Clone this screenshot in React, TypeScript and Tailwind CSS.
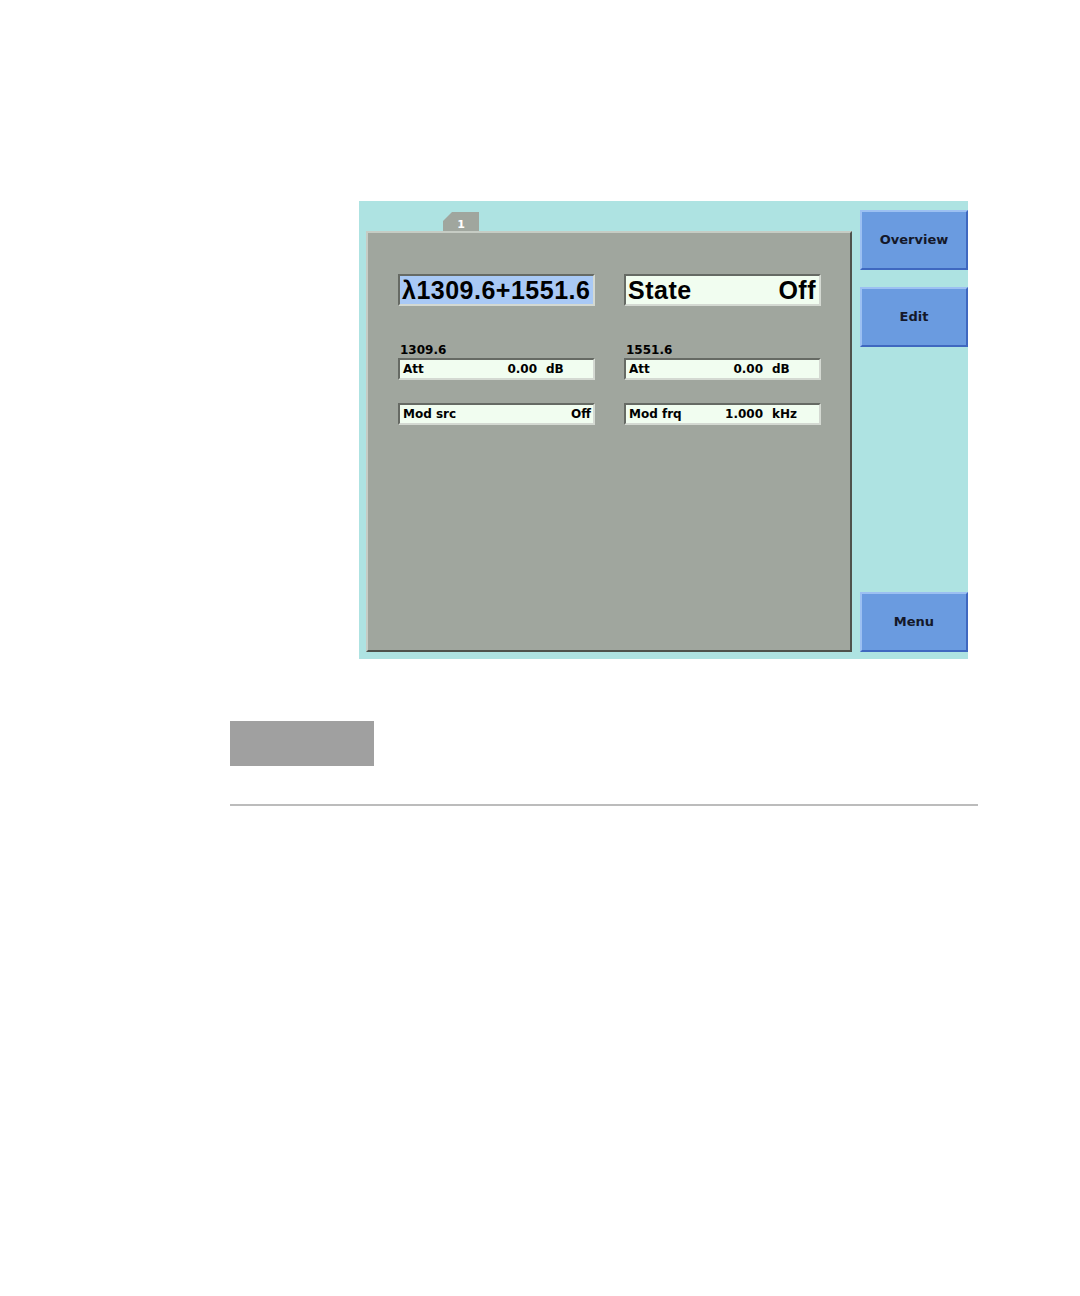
import React from "react";

const font = { fontFamily: '"DejaVu Sans", "Liberation Sans", sans-serif' };
const bigFont = { fontFamily: '"Liberation Sans", Arial, sans-serif' };

function SoftKey({ label }: { label: string }) {
  return (
    <div className="flex h-[60px] w-[108px] items-center justify-center border-2 border-t-[#9cc0f2] border-l-[#9cc0f2] border-b-[#3f68c0] border-r-[#3f68c0] bg-[#6a9be0] text-[13px] font-semibold text-[#14182a]">
      {label}
    </div>
  );
}

function Field({
  label,
  value,
  unit,
  big,
  blue,
}: {
  label: string;
  value?: string;
  unit?: string;
  big?: boolean;
  blue?: boolean;
}) {
  return (
    <div
      className={`flex w-[197px] items-center border-2 border-t-[#666a64] border-l-[#666a64] border-b-[#d4d9d2] border-r-[#d4d9d2] text-black ${
        big
          ? "h-[32px] pl-[2px] pr-[3px] text-[25px] font-bold tracking-[0.5px]"
          : "h-[22px] pl-[3px] pr-[2px] text-[12px] font-bold"
      } ${blue ? "bg-[#a9c9f5]" : "bg-[#f1fdf0]"}`}
      style={big ? bigFont : undefined}
    >
      <span className="flex-1 leading-none">{label}</span>
      {value && <span className="leading-none">{value}</span>}
      {unit !== undefined && <span className="ml-[9px] w-[45px] leading-none">{unit}</span>}
    </div>
  );
}

function Channel({ name, second }: { name: string; second: React.ReactNode }) {
  return (
    <div>
      <div className="mb-[1px] pl-[2px] pt-[3px] text-[12px] font-bold leading-[14px] text-black">{name}</div>
      <Field label="Att" value="0.00" unit="dB" />
      <div className="mt-[23px]">{second}</div>
    </div>
  );
}

export default function App() {
  return (
    <div className="min-h-[1296px] w-[1080px] bg-white" style={font}>
      <div className="pt-[201px] pl-[359px]">
        <div className="flex h-[458px] w-[609px] bg-[#aee3e2]">
          <div className="flex w-[493px] flex-col pl-[7px] pb-[7px]">
            <div className="h-[30px] pt-[11px] pl-[77px]">
              <div className="flex h-[19px] w-[36px] items-end justify-center bg-[#a0a69e] pb-[1px] text-[11px] font-bold leading-none text-white [clip-path:polygon(9px_0,100%_0,100%_100%,0_100%,0_9px)]">
                1
              </div>
            </div>
            <div className="flex-1 border-2 border-t-[#c6ccc4] border-l-[#c6ccc4] border-b-[#4e524c] border-r-[#4e524c] bg-[#a0a69e] pl-[30px] pt-[41px]">
              <div className="flex gap-[29px]">
                <Field label="λ1309.6+1551.6" big blue />
                <Field label="State" value="Off" big />
              </div>
              <div className="mt-[34px] flex gap-[29px]">
                <Channel name="1309.6" second={<Field label="Mod src" value="Off" />} />
                <Channel name="1551.6" second={<Field label="Mod frq" value="1.000" unit="kHz" />} />
              </div>
            </div>
          </div>
          <div className="ml-[8px] flex flex-col pt-[9px] pb-[7px]">
            <SoftKey label="Overview" />
            <div className="mt-[17px]">
              <SoftKey label="Edit" />
            </div>
            <div className="mt-auto">
              <SoftKey label="Menu" />
            </div>
          </div>
        </div>
      </div>
      <div className="pl-[230px] pt-[62px]">
        <div className="h-[45px] w-[144px] bg-[#a0a0a0]" />
      </div>
      <div className="ml-[230px] mt-[38px] h-[2px] w-[748px] bg-[#bcbcbc]" />
    </div>
  );
}
